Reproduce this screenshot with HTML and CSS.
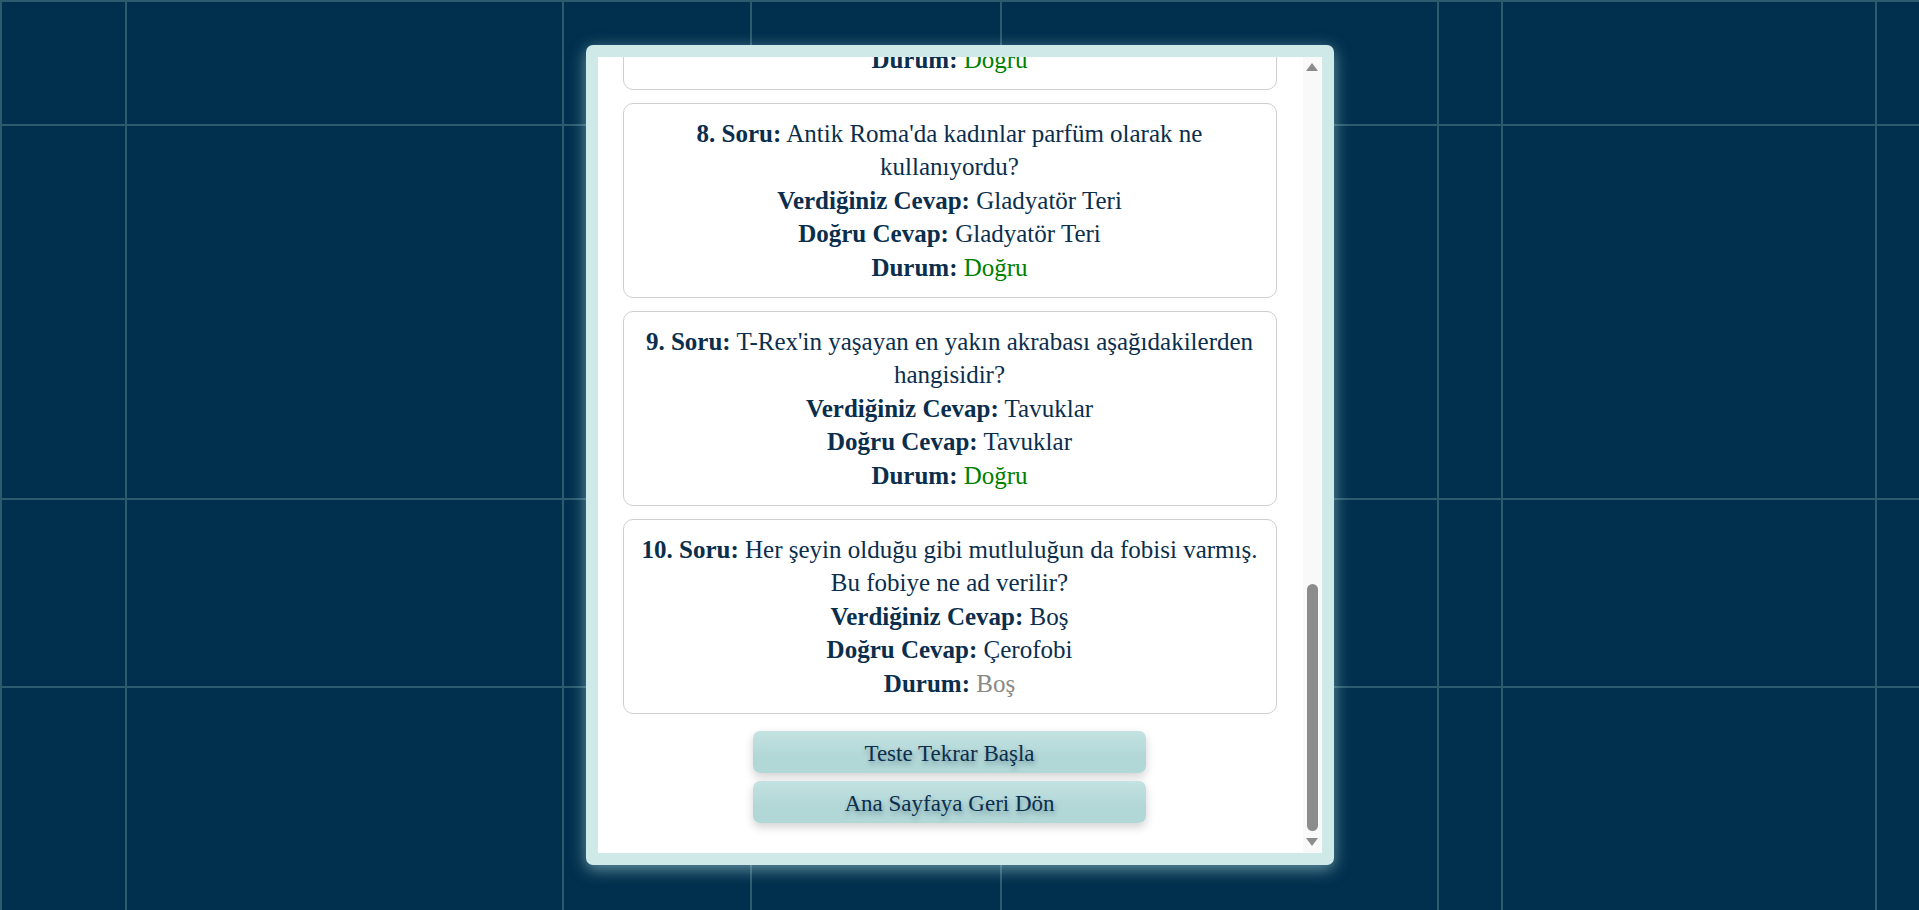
FILE: index.html
```html
<!DOCTYPE html>
<html lang="tr">
<head>
<meta charset="utf-8">
<title>Test Sonuçları</title>
<link rel="stylesheet" href="styles.css">
</head>
<body>
<div class="modal">
  <div class="scroller">
    <div class="content">
      <div class="header">
        <h2 class="title">Test Sonuçları</h2>
        <p class="score">10 sorudan 8 doğru, 1 yanlış, 1 boş</p>
        <p class="score">Puanınız: <b>80</b></p>
      </div>

      <div class="card">
        <p><b>1. Soru:</b> Dünyanın en uzun nehri olarak kabul edilen<br>nehir hangisidir?</p>
        <p><b>Verdiğiniz Cevap:</b> Nil Nehri</p>
        <p><b>Doğru Cevap:</b> Nil Nehri</p>
        <p><b>Durum:</b> <span class="ok">Doğru</span></p>
      </div>
      <div class="card">
        <p><b>2. Soru:</b> Mona Lisa tablosu günümüzde hangi müzede<br>sergilenmektedir?</p>
        <p><b>Verdiğiniz Cevap:</b> Louvre Müzesi</p>
        <p><b>Doğru Cevap:</b> Louvre Müzesi</p>
        <p><b>Durum:</b> <span class="ok">Doğru</span></p>
      </div>
      <div class="card">
        <p><b>3. Soru:</b> Bir ahtapotun vücudunda toplam kaç tane<br>kalp bulunmaktadır?</p>
        <p><b>Verdiğiniz Cevap:</b> 3</p>
        <p><b>Doğru Cevap:</b> 3</p>
        <p><b>Durum:</b> <span class="ok">Doğru</span></p>
      </div>
      <div class="card">
        <p><b>4. Soru:</b> Güneş sistemindeki en büyük gezegen<br>aşağıdakilerden hangisidir?</p>
        <p><b>Verdiğiniz Cevap:</b> Jüpiter</p>
        <p><b>Doğru Cevap:</b> Jüpiter</p>
        <p><b>Durum:</b> <span class="ok">Doğru</span></p>
      </div>
      <div class="card">
        <p><b>5. Soru:</b> Bal arıları bir kilogram bal yapmak için<br>yaklaşık kaç çiçeği ziyaret eder?</p>
        <p><b>Verdiğiniz Cevap:</b> 1 milyon</p>
        <p><b>Doğru Cevap:</b> 4 milyon</p>
        <p><b>Durum:</b> <span class="bad">Yanlış</span></p>
      </div>
      <div class="card">
        <p><b>6. Soru:</b> İnsan vücudundaki en küçük kemik hangi<br>organımızda yer almaktadır?</p>
        <p><b>Verdiğiniz Cevap:</b> Kulak</p>
        <p><b>Doğru Cevap:</b> Kulak</p>
        <p><b>Durum:</b> <span class="ok">Doğru</span></p>
      </div>
      <div class="card">
        <p><b>7. Soru:</b> Dünya üzerinde en fazla konuşulan ana dil<br>aşağıdakilerden hangisidir?</p>
        <p><b>Verdiğiniz Cevap:</b> Çince</p>
        <p><b>Doğru Cevap:</b> Çince</p>
        <p><b>Durum:</b> <span class="ok">Doğru</span></p>
      </div>
      <div class="card">
        <p><b>8. Soru:</b> Antik Roma'da kadınlar parfüm olarak ne<br>kullanıyordu?</p>
        <p><b>Verdiğiniz Cevap:</b> Gladyatör Teri</p>
        <p><b>Doğru Cevap:</b> Gladyatör Teri</p>
        <p><b>Durum:</b> <span class="ok">Doğru</span></p>
      </div>
      <div class="card">
        <p><b>9. Soru:</b> T-Rex'in yaşayan en yakın akrabası aşağıdakilerden<br>hangisidir?</p>
        <p><b>Verdiğiniz Cevap:</b> Tavuklar</p>
        <p><b>Doğru Cevap:</b> Tavuklar</p>
        <p><b>Durum:</b> <span class="ok">Doğru</span></p>
      </div>
      <div class="card">
        <p><b>10. Soru:</b> Her şeyin olduğu gibi mutluluğun da fobisi varmış.<br>Bu fobiye ne ad verilir?</p>
        <p><b>Verdiğiniz Cevap:</b> Boş</p>
        <p><b>Doğru Cevap:</b> Çerofobi</p>
        <p><b>Durum:</b> <span class="empty">Boş</span></p>
      </div>

      <div class="actions">
        <button class="btn" type="button">Teste Tekrar Başla</button>
        <button class="btn" type="button">Ana Sayfaya Geri Dön</button>
      </div>
    </div>
  </div>
  <div class="scrollbar" aria-hidden="true">
    <div class="sb-up"></div>
    <div class="sb-track"><div class="sb-thumb"></div></div>
    <div class="sb-down"></div>
  </div>
</div>
</body>
</html>
```

FILE: styles.css
```css
html, body {
  margin: 0;
  height: 100%;
}

body {
  --line: #2c5b70;
  background-color: #00304e;
  background-image:
    linear-gradient(var(--line), var(--line)),
    linear-gradient(var(--line), var(--line)),
    linear-gradient(var(--line), var(--line)),
    linear-gradient(var(--line), var(--line)),
    linear-gradient(var(--line), var(--line)),
    linear-gradient(var(--line), var(--line)),
    linear-gradient(var(--line), var(--line)),
    linear-gradient(var(--line), var(--line)),
    linear-gradient(var(--line), var(--line)),
    linear-gradient(var(--line), var(--line)),
    linear-gradient(var(--line), var(--line)),
    linear-gradient(var(--line), var(--line));
  background-repeat: no-repeat;
  background-size:
    2px 100%, 2px 100%, 2px 100%, 2px 100%, 2px 100%, 2px 100%, 2px 100%, 2px 100%,
    100% 2px, 100% 2px, 100% 2px, 100% 2px;
  background-position:
    0 0, 125px 0, 562px 0, 750px 0, 1000px 0, 1437px 0, 1501px 0, 1875px 0,
    0 0, 0 124px, 0 498px, 0 686px;
  display: flex;
  align-items: center;
  justify-content: center;
  font-family: "Liberation Serif", "Times New Roman", serif;
  color: #0a2e4c;
}

.modal {
  width: 724px;
  height: 796px;
  padding: 12px;
  background: #cfe8e8;
  border-radius: 7px;
  box-shadow: 0 4px 16px rgba(190, 232, 232, 0.55);
  display: flex;
}

.scroller {
  flex: 1;
  min-width: 0;
  background: #ffffff;
  overflow-y: scroll;
  scrollbar-width: none;
  display: flex;
  flex-direction: column-reverse;
}

.content {
  padding: 25px 26px 30px 25px;
}

.header {
  text-align: center;
  padding-bottom: 12px;
}

.title {
  margin: 10px 0 16px;
  font-size: 34px;
}

.score {
  margin: 0;
  font-size: 25px;
  line-height: 33.6px;
}

.card {
  border: 1px solid #cfcfcf;
  border-radius: 10px;
  padding: 12.5px;
  margin-bottom: 13px;
  text-align: center;
  font-size: 25px;
  line-height: 33.6px;
}

.card p {
  margin: 0;
}

.card b {
  font-weight: 700;
}

.ok {
  color: #008000;
}

.bad {
  color: #d11a1a;
}

.empty {
  color: #888888;
}

.actions {
  display: flex;
  flex-direction: column;
  align-items: center;
  gap: 8px;
  margin-top: 17px;
}

.btn {
  width: 393px;
  height: 42px;
  padding: 3px 0 0;
  border: none;
  border-radius: 7px;
  background: linear-gradient(#c4e2e2, #b2d7d7 60%);
  box-shadow: 0 4px 10px rgba(0, 0, 0, 0.18);
  font-family: "Liberation Serif", "Times New Roman", serif;
  font-size: 23px;
  color: #0a2e4c;
  text-shadow: 1px 3px 5px rgba(0, 40, 60, 0.35);
  cursor: pointer;
}

.scrollbar {
  width: 19px;
  background: #f9f9f9;
  display: flex;
  flex-direction: column;
  align-items: center;
}

.sb-up {
  margin-top: 6px;
  width: 0;
  height: 0;
  border-left: 6px solid transparent;
  border-right: 6px solid transparent;
  border-bottom: 8.5px solid #8c8c8c;
}

.sb-track {
  flex: 1;
  display: flex;
  flex-direction: column;
  justify-content: flex-end;
}

.sb-thumb {
  width: 11px;
  height: 247px;
  border-radius: 6px;
  background: #8c8c8c;
}

.sb-down {
  margin: 7.5px 0 7px;
  width: 0;
  height: 0;
  border-left: 6px solid transparent;
  border-right: 6px solid transparent;
  border-top: 8.5px solid #8c8c8c;
}
```
